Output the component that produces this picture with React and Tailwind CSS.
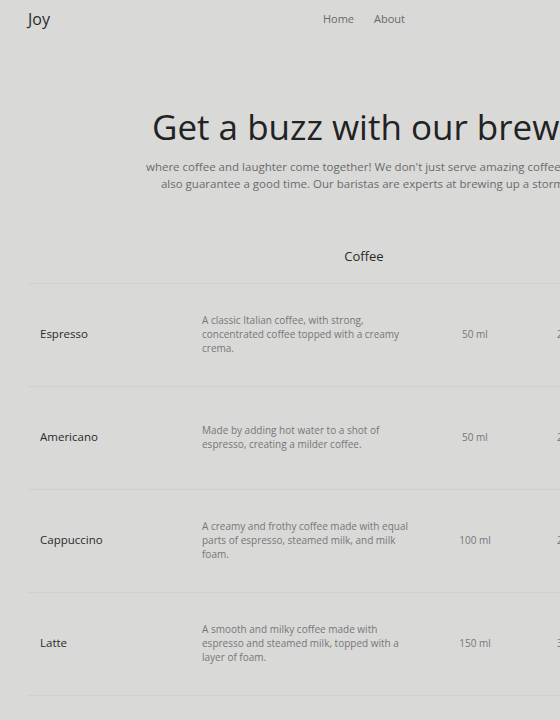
import React from "react";

const coffees = [
  {
    name: "Espresso",
    desc: "A classic Italian coffee, with strong, concentrated coffee topped with a creamy crema.",
    size: "50 ml",
    price: "2.50",
  },
  {
    name: "Americano",
    desc: "Made by adding hot water to a shot of espresso, creating a milder coffee.",
    size: "50 ml",
    price: "2.75",
  },
  {
    name: "Cappuccino",
    desc: "A creamy and frothy coffee made with equal parts of espresso, steamed milk, and milk foam.",
    size: "100 ml",
    price: "2.25",
  },
  {
    name: "Latte",
    desc: "A smooth and milky coffee made with espresso and steamed milk, topped with a layer of foam.",
    size: "150 ml",
    price: "3.00",
  },
];

function App() {
  return (
    <div
      className="min-h-screen w-[728px] bg-[#d9d9d8] text-[#232323]"
      style={{ fontFamily: '"Open Sans", sans-serif' }}
    >
      <nav className="relative flex items-center h-[38px] px-7">
        <a className="text-[16px] text-[#2a2a2a]">Joy</a>
        <div className="absolute left-[364px] -translate-x-1/2 flex gap-5 text-[11px] text-[#6a6a6a]">
          <a>Home</a>
          <a>About</a>
        </div>
      </nav>

      <section className="flex flex-col items-center pt-[67px] text-center">
        <h1 className="text-[35px] leading-[44px] whitespace-nowrap text-[#222]">
          Get a buzz with our brews
        </h1>
        <p className="mt-[9px] whitespace-nowrap text-[11.5px] leading-[17px] text-[#6b6b6b]">
          where coffee and laughter come together! We don't just serve amazing coffee, we
          <br />
          also guarantee a good time. Our baristas are experts at brewing up a storm.
        </p>
      </section>

      <div className="mx-7 mt-[54px]">
        <h2 className="text-center text-[13px] leading-[20px] text-[#2a2a2a] pb-[17px]">
          Coffee
        </h2>
        <div className="border-t border-[#d0d0cf]">
          {coffees.map((c) => (
            <div
              key={c.name}
              className="grid grid-cols-[174px_230px_86px_1fr] items-center h-[103px] border-b border-[#d0d0cf]"
            >
              <div className="pl-3 pb-[2px] text-[11.5px] text-[#2a2a2a]">{c.name}</div>
              <div className="text-[10px] leading-[14px] text-[#777] pr-5 pb-[2px]">{c.desc}</div>
              <div className="text-center text-[10px] text-[#777] pb-[2px]">{c.size}</div>
              <div className="pl-[39px] text-[10px] text-[#777] pb-[2px]">{c.price}</div>
            </div>
          ))}
        </div>
      </div>
    </div>
  );
}

export default App;
